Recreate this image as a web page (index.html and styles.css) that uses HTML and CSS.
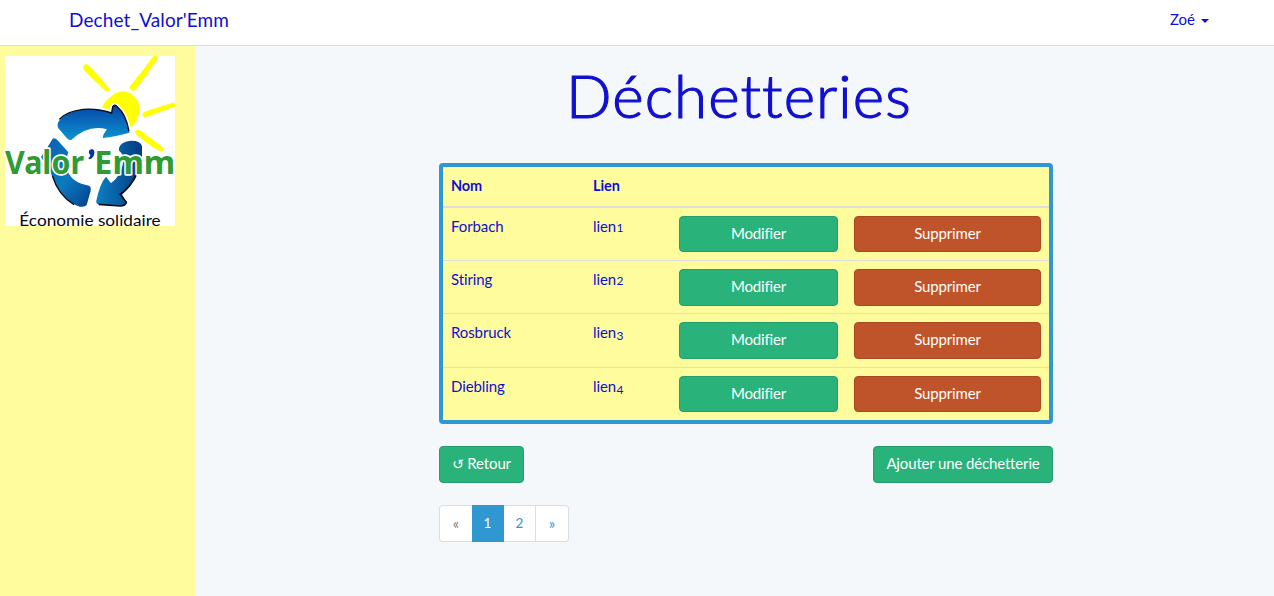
FILE: index.html
```html
<!DOCTYPE html>
<html lang="fr">
<head>
<meta charset="utf-8">
<title>Dechet_Valor'Emm</title>
<link rel="stylesheet" href="styles.css">
</head>
<body>
<header class="navbar"><a class="brand">Dechet_Valor'Emm</a><a class="user"><span class="username">Zoé</span><span class="caret"></span></a></header>
<div class="layout">
<aside class="sidebar">
<svg class="logo" viewBox="15 48 510 510">
<defs><linearGradient id="b" x1="0" y1="0" x2="0" y2="1"><stop offset="0" stop-color="#0645a5"/><stop offset="1" stop-color="#0b94d2"/></linearGradient>
<linearGradient id="c" x1="0" y1="0" x2="1" y2="0"><stop offset="0" stop-color="#0b80c2"/><stop offset="1" stop-color="#033a80"/></linearGradient>
<linearGradient id="d" x1="0" y1="0" x2="1" y2="1"><stop offset="0" stop-color="#0b5cae"/><stop offset=".55" stop-color="#0a7cc0"/><stop offset="1" stop-color="#033f8c"/></linearGradient></defs>
<rect x="15" y="48" width="510" height="510" fill="#fff"/>
<g fill="#ff0" stroke="#ff0" stroke-width="3">
<path d="M252 77Q258 70 266 77L286 98L328 147Q329 154 319 153L304 140L255 92Q249 84 252 77Z"/>
<path d="M461 49H471V57L442 100L406 149Q396 154 391 145Q388 139 397 132L432 88Z"/>
<path d="M430 219L445 213L520 189L524 190V199L487 212L434 231Q426 228 430 219Z"/>
<path d="M408 272Q414 268 422 274L490 325Q490 334 480 332L456 319L413 286Q405 279 408 272Z"/>
<path d="M309 209Q309 186 333 172Q343 158 370 155Q395 158 407 176Q423 195 414 227Q409 250 388 263L340 230Z"/>
</g>
<path d="M174 248Q190 218 250 208Q295 204 334 218L337 199Q344 191 352 200Q380 225 388 278Q355 288 309 294Q306 288 321 268Q265 252 215 299Q205 302 198 292L174 263Q171 256 174 248Z" fill="none" stroke="#fff" stroke-width="13"/>
<path d="M174 248Q190 218 250 208Q295 204 334 218L337 199Q344 191 352 200Q380 225 388 278Q355 288 309 294Q306 288 321 268Q265 252 215 299Q205 302 198 292L174 263Q171 256 174 248Z" fill="url(#b)"/>
<path d="M178 238Q198 214 250 208Q295 205 335 219L338 201Q344 191 352 200Q378 222 387 274" fill="none" stroke="#080b16" stroke-width="4"/>
<path d="M158 296Q164 292 172 300L205 337Q194 365 203 394Q218 430 267 437Q274 440 272 453L260 495Q256 502 239 500Q180 480 155 405L123 351L139 327Z" fill="url(#d)"/>
<path d="M157 407Q174 465 222 494" fill="none" stroke="#080b16" stroke-width="4"/>
<path d="M357 324Q362 304 394 302Q423 302 426 319V369Q412 421 366 464L380 489Q377 499 361 498L296 493Q287 491 289 482Q300 429 318 410L333 430Q364 406 370 365Q372 343 357 332Z" fill="url(#c)"/>
<path d="M410 401Q394 440 361 463L379 487Q376 498 361 498L296 493" fill="none" stroke="#080b16" stroke-width="5"/>
<g class="wordmark"><text x="15" y="401" textLength="237" lengthAdjust="spacingAndGlyphs">Valor</text><text x="283" y="401" textLength="243" lengthAdjust="spacingAndGlyphs">Emm</text></g>
<path d="M267 333Q269 326 278 328Q286 332 282 345Q279 355 268 358L265 354Q274 348 269 343Q265 339 267 333Z" fill="#0634a4"/>
<text class="tagline" x="58" y="557" textLength="424" lengthAdjust="spacingAndGlyphs">Économie solidaire</text>
</svg>
</aside>
<main class="main">
<h1 class="title">Déchetteries</h1>
<section class="content">
<div class="table">
<div class="row head"><div class="cell">Nom</div><div class="cell">Lien</div></div>
<div class="row"><div class="cell">Forbach</div><div class="cell">lien<span class="digit">1</span></div><div class="cell"><a class="btn">Modifier</a></div><div class="cell"><a class="btn danger">Supprimer</a></div></div>
<div class="row"><div class="cell">Stiring</div><div class="cell">lien<span class="digit">2</span></div><div class="cell"><a class="btn">Modifier</a></div><div class="cell"><a class="btn danger">Supprimer</a></div></div>
<div class="row"><div class="cell">Rosbruck</div><div class="cell">lien<span class="digit low">3</span></div><div class="cell"><a class="btn">Modifier</a></div><div class="cell"><a class="btn danger">Supprimer</a></div></div>
<div class="row"><div class="cell">Diebling</div><div class="cell">lien<span class="digit low">4</span></div><div class="cell"><a class="btn">Modifier</a></div><div class="cell"><a class="btn danger">Supprimer</a></div></div>
</div>
<div class="actions"><a class="btn back"><span class="arrow">↺</span> Retour</a><a class="btn add">Ajouter une déchetterie</a></div>
<nav class="pagination"><span class="page off">«</span><span class="page active">1</span><a class="page">2</a><a class="page">»</a></nav>
</section>
</main>
</div>
</body>
</html>
```
FILE: styles.css
```css
* { box-sizing: border-box; }
body { margin: 0; background: #f5f8fa; color: #1010d0; font: 15px/21px Lato, "Open Sans", sans-serif; overflow: hidden; }
.navbar { height: 46px; background: #fff; border-bottom: 1px solid #d3e0e9; display: flex; justify-content: space-between; padding: 9px 65px 0 69px; }
.brand { font-size: 19px; line-height: 22px; letter-spacing: .1px; }
.user { display: flex; align-items: center; height: 21px; gap: 6px; }
.caret { border: 4px solid transparent; border-top-color: #1010d0; border-bottom: 0; margin-top: 3px; }
.layout { display: flex; height: 550px; }
.sidebar { width: 195px; background: #fffc9e; padding: 10px 5px; }
.logo { display: block; width: 170px; height: 170px; overflow: visible; }
.wordmark { font: 700 99px "Noto Sans", "Open Sans", sans-serif; fill: #309b32; stroke: #fff; stroke-width: 10px; stroke-linejoin: round; paint-order: stroke; }
.tagline { font: 48px Lato, sans-serif; fill: #080808; }
.main { flex: 1; }
.title { margin: 16px 0 0; padding-left: 371px; font-size: 60px; line-height: 66px; font-weight: 300; letter-spacing: 1.1px; -webkit-text-stroke: 1.2px #1010d0; white-space: nowrap; }
.content { width: 614px; margin: 35px 0 0 244px; }
.table { border: 4px solid #3097d1; border-radius: 4px; background: #fffc9e; height: 261px; }
.row { display: grid; grid-template-columns: 142px 86px 175px 203px; height: 53.3px; border-top: 1px solid #ddd; }
.row.head { height: 41px; border-top: 0; border-bottom: 2px solid #ddd; font-size: 14.5px; line-height: 22px; font-weight: 700; }
.head + .row { height: 52.2px; border-top: 0; }
.cell { padding: 8px; white-space: nowrap; letter-spacing: -.1px; }
.digit { font-size: 12px; margin-left: .5px; }
.low { vertical-align: -2px; line-height: 1; }
.btn { display: block; height: 36.4px; line-height: 21px; padding: 6px 0; border: 1px solid #259d6d; border-radius: 4px; background: #2ab27b; color: #fff; text-align: center; white-space: nowrap; font-weight: 400; letter-spacing: -.15px; }
.danger { background: #bf5329; border-color: #aa4a24; }
.actions { display: flex; justify-content: space-between; margin-top: 22px; }
.actions .btn { height: 37px; letter-spacing: -.15px; }
.back { width: 85px; }
.arrow { font-family: "DejaVu Sans", sans-serif; font-size: 14px; line-height: 1; }
.add { width: 180px; }
.pagination { display: flex; margin-top: 22px; width: 130px; height: 37px; }
.page { width: 32px; border: 1px solid #ddd; border-left: 0; background: #fff; color: #3097d1; text-align: center; line-height: 35px; font-size: 13.5px; }
.page:first-child { width: 33px; border-left: 1px solid #ddd; border-right: 0; border-radius: 4px 0 0 4px; font-size: 15px; }
.page:last-child { width: 33px; border-radius: 0 4px 4px 0; font-size: 15px; }
.page.off { color: #777; }
.page.active { background: #3097d1; border-color: #3097d1; color: #fff; }
```
